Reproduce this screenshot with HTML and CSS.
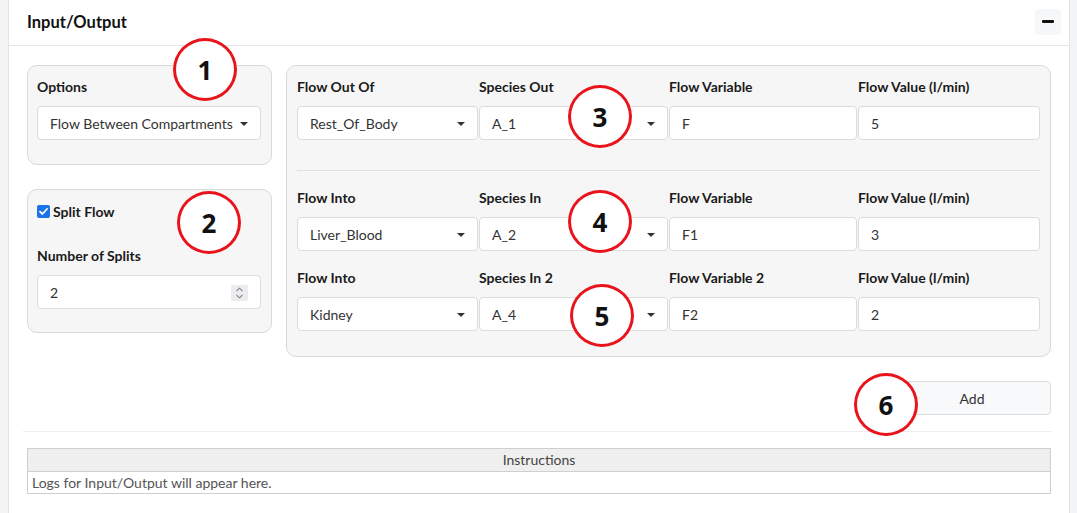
FILE: index.html
```html
<!DOCTYPE html>
<html>
<head>
<meta charset="utf-8">
<link rel="stylesheet" href="styles.css">
</head>
<body>
<div class="card">
  <div class="card-header">
    <div class="title">Input/Output</div>
    <div class="collapse-btn"><span class="bar"></span></div>
  </div>
  <div class="card-body">
    <div class="main-row">
      <div class="left-col">
        <div class="well well-options">
          <div class="label">Options</div>
          <div class="select">Flow Between Compartments<span class="caret"></span></div>
        </div>
        <div class="well well-split">
          <div class="check-row">
            <svg class="checkbox" width="13" height="13" viewBox="0 0 13 13"><rect x="0" y="0" width="13" height="13" rx="2" fill="#1a73e8"/><path d="M3 6.7 L5.4 9 L10 4" fill="none" stroke="#fff" stroke-width="1.8" stroke-linecap="round" stroke-linejoin="round"/></svg>
            <span class="check-label">Split Flow</span>
          </div>
          <div class="label">Number of Splits</div>
          <div class="select number">2
            <svg class="spinner" width="17" height="16" viewBox="0 0 17 16"><rect width="17" height="16" fill="#ebebf0"/><path d="M5.5 6 L8.5 3.2 L11.5 6" fill="none" stroke="#888" stroke-width="1.1"/><path d="M5.5 10 L8.5 12.8 L11.5 10" fill="none" stroke="#888" stroke-width="1.1"/></svg>
          </div>
        </div>
      </div>
      <div class="right-col">
        <div class="well well-flow">
          <div class="grid-row">
            <div class="field"><div class="label">Flow Out Of</div><div class="select">Rest_Of_Body<span class="caret"></span></div></div>
            <div class="field"><div class="label">Species Out</div><div class="select">A_1<span class="caret"></span></div></div>
            <div class="field"><div class="label">Flow Variable</div><div class="select">F</div></div>
            <div class="field"><div class="label">Flow Value (l/min)</div><div class="select">5</div></div>
          </div>
          <div class="divider"></div>
          <div class="grid-row">
            <div class="field"><div class="label">Flow Into</div><div class="select">Liver_Blood<span class="caret"></span></div></div>
            <div class="field"><div class="label">Species In</div><div class="select">A_2<span class="caret"></span></div></div>
            <div class="field"><div class="label">Flow Variable</div><div class="select">F1</div></div>
            <div class="field"><div class="label">Flow Value (l/min)</div><div class="select">3</div></div>
          </div>
          <div class="grid-row row-gap">
            <div class="field"><div class="label">Flow Into</div><div class="select">Kidney<span class="caret"></span></div></div>
            <div class="field"><div class="label">Species In 2</div><div class="select">A_4<span class="caret"></span></div></div>
            <div class="field"><div class="label">Flow Variable 2</div><div class="select">F2</div></div>
            <div class="field"><div class="label">Flow Value (l/min)</div><div class="select">2</div></div>
          </div>
        </div>
        <div class="btn-row"><div class="btn">Add</div></div>
      </div>
    </div>
    <div class="hr"></div>
    <div class="log">
      <div class="log-head">Instructions</div>
      <div class="log-row">Logs for Input/Output will appear here.</div>
    </div>
  </div>
</div>
<div class="marker m1">1</div>
<div class="marker m2">2</div>
<div class="marker m3">3</div>
<div class="marker m4">4</div>
<div class="marker m5">5</div>
<div class="marker m6">6</div>
</body>
</html>
```
FILE: styles.css
```css
* { box-sizing: border-box; }
html, body { margin: 0; padding: 0; }
body {
  background: #f3f4f6;
  font-family: Lato, "Noto Sans", sans-serif;
  font-size: 14px;
  color: #222;
  width: 1077px;
  height: 513px;
  overflow: hidden;
  position: relative;
}
.card {
  margin-left: 8px;
  width: 1062px;
  background: #fff;
  border-left: 1px solid #e2e4e8;
  border-right: 1px solid #e2e4e8;
  min-height: 560px;
}
.card-header {
  height: 46px;
  border-bottom: 1px solid #e6e6e6;
  display: flex;
  align-items: center;
  justify-content: space-between;
  padding: 0 8px 0 18px;
}
.title { font-weight: 700; font-size: 16.5px; color: #111; margin-top: -2px; }
.collapse-btn {
  width: 26px; height: 26px;
  background: #f6f7f8;
  border-radius: 4px;
  display: flex; align-items: center; justify-content: center;
  margin-top: -2px;
}
.collapse-btn .bar { width: 12px; height: 3px; background: #111; border-radius: 1px; }
.card-body { padding: 19px 18px 0 18px; }
.main-row { display: flex; gap: 14px; }
.left-col { width: 245px; }
.right-col { width: 765px; }
.well {
  background: #f6f6f6;
  border: 1px solid #d9d9d9;
  border-radius: 10px;
}
.well-options { height: 100px; padding: 11px 10px 0 9px; }
.well-split { height: 144px; margin-top: 24px; padding: 11px 10px 0 9px; }
.label { font-weight: 700; font-size: 14px; color: #1a1a1a; height: 20px; line-height: 20px; margin-bottom: 9px; }
.select {
  height: 34px;
  background: #fff;
  border: 1px solid #dcdcdc;
  border-radius: 4px;
  padding-left: 12px;
  display: flex; align-items: center;
  position: relative;
  color: #333;
  font-size: 14px;
}
.caret {
  position: absolute; right: 12px; top: 15px;
  width: 0; height: 0;
  border-left: 4px solid transparent; border-right: 4px solid transparent;
  border-top: 4px solid #333;
}
.check-row { display: flex; align-items: center; height: 20px; margin-bottom: 25px; }
.checkbox { margin-right: 3px; }
.check-label { font-weight: 700; color: #1a1a1a; }
.spinner { position: absolute; right: 12px; top: 9px; }
.well-flow { height: 292px; padding: 11px 10px 0 10px; }
.grid-row { display: grid; grid-template-columns: 181px 189px 188px 182px; column-gap: 1px; }
.row-gap { margin-top: 17px; }
.divider { height: 1px; background: #e0e0e0; margin: 30px 0 17px 0; }
.btn-row { display: flex; justify-content: flex-end; margin-top: 24px; }
.btn {
  width: 158px; height: 34px;
  background: #f8f9fa;
  border: 1px solid #dcdcdc;
  border-radius: 4px;
  display: flex; align-items: center; justify-content: center;
  color: #333;
}
.hr { height: 1px; background: #ececec; margin-top: 16px; margin-left: -4px; }
.log { margin-top: 16px; border: 1px solid #cfcfcf; }
.log-head {
  height: 23px; background: #efefef; border-bottom: 1px solid #cfcfcf;
  text-align: center; line-height: 22px; color: #444;
}
.log-row { height: 21px; line-height: 21px; padding-left: 4px; color: #555; }
.marker {
  position: absolute;
  width: 64px; height: 63px;
  border: 3px solid #e8131b;
  border-radius: 50%;
  background: #fff;
  display: flex; align-items: center; justify-content: center;
  font-family: "Open Sans", sans-serif;
  font-weight: 700; font-size: 26px; color: #111;
}
.m1 { left: 173px; top: 38px; }
.m2 { left: 177px; top: 191px; }
.m3 { left: 568px; top: 85px; }
.m4 { left: 568px; top: 190px; }
.m5 { left: 570px; top: 284px; }
.m6 { left: 854px; top: 373px; }
```
